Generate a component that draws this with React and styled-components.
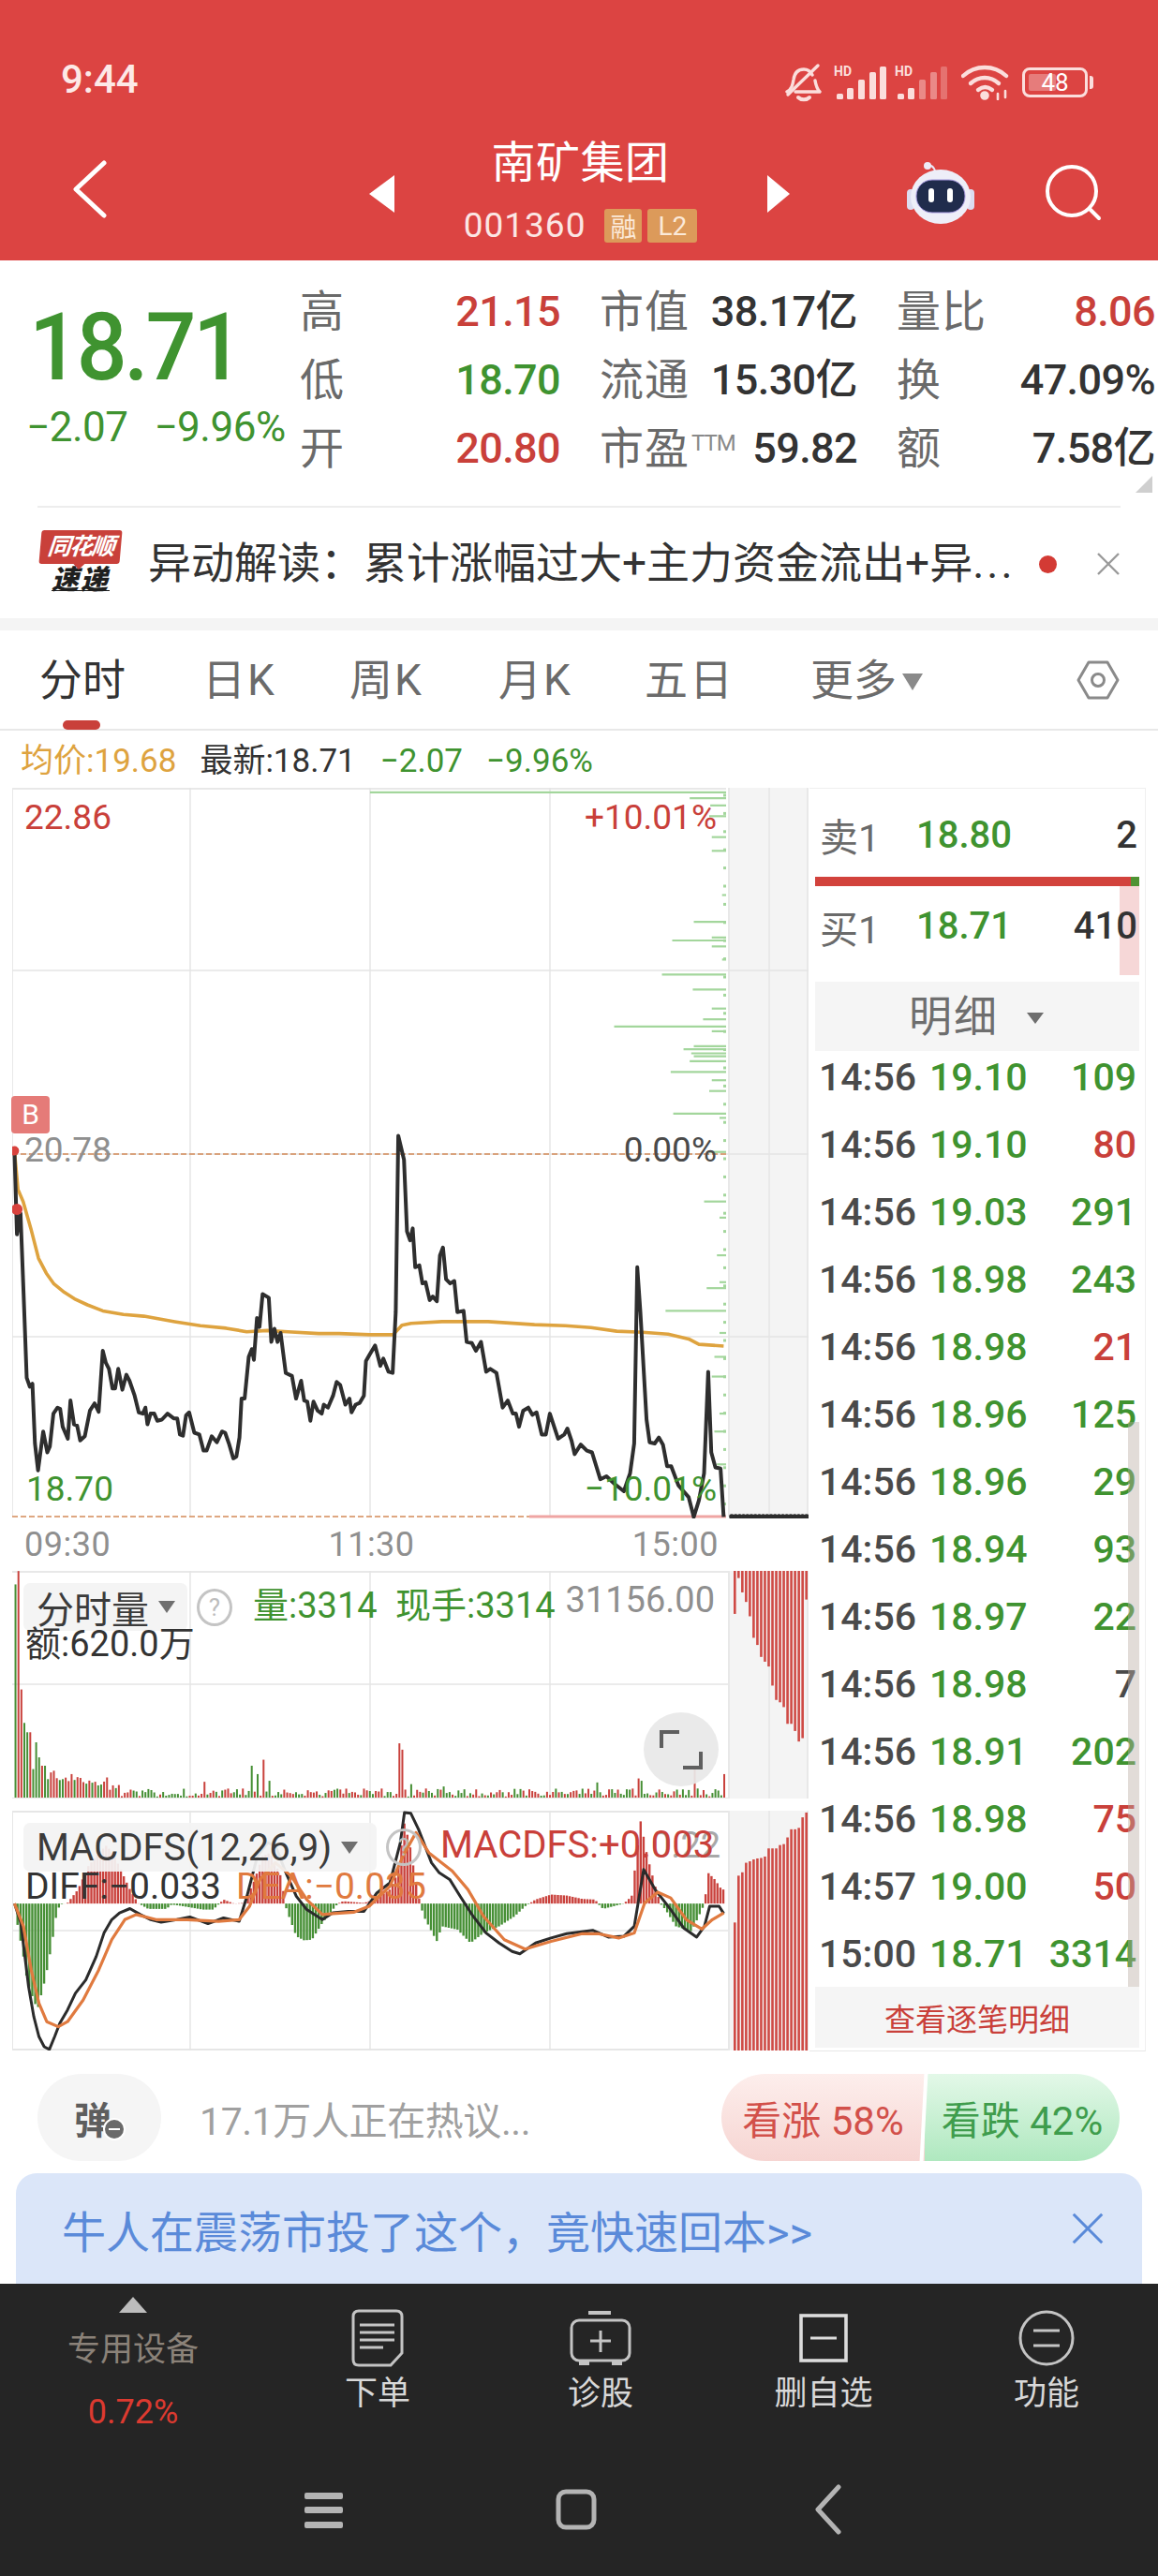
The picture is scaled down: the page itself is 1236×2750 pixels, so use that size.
import React from "react";
import styled, { createGlobalStyle } from "styled-components";

const RED = "#c9403a";
const GREEN = "#3f9330";
const HEAD = "#dc4442";
const FONT = `Roboto, "Noto Sans CJK SC", "Noto Sans", sans-serif`;
const toneColor = { red: RED, green: GREEN, dark: "#333", gray: "#8f8f8f", ink: "#4a4a4a" };

const Global = createGlobalStyle`
  html, body { margin: 0; padding: 0; background: #fff; }
  body { font-family: ${FONT}; }
  * { box-sizing: border-box; }
`;

/* ---------- chart data, in sampling coordinates of each plot ---------- */
const PRICE_LINE = [[28,860],[33,1000],[40,965],[46,1100],[52,1240],[58,1255],[63,1250],[68,1350],[74,1395],[84,1330],[92,1365],[97,1355],[104,1300],[112,1290],[117,1292],[122,1322],[132,1342],[137,1278],[144,1318],[150,1320],[156,1345],[165,1338],[175,1295],[184,1283],[192,1297],[200,1195],[206,1215],[212,1225],[219,1258],[224,1258],[230,1225],[238,1260],[246,1235],[252,1245],[262,1270],[270,1298],[278,1300],[283,1290],[287,1318],[293,1300],[300,1300],[306,1312],[315,1310],[326,1300],[338,1308],[345,1308],[350,1335],[356,1337],[362,1303],[368,1298],[378,1332],[388,1335],[396,1362],[402,1362],[412,1338],[422,1348],[432,1330],[438,1332],[446,1352],[454,1375],[460,1372],[466,1340],[470,1275],[476,1275],[484,1205],[490,1192],[494,1210],[500,1140],[505,1155],[511,1100],[523,1106],[528,1180],[534,1158],[540,1180],[546,1165],[556,1232],[568,1237],[576,1275],[586,1245],[592,1278],[598,1280],[604,1312],[610,1280],[618,1295],[626,1300],[630,1285],[638,1290],[648,1270],[655,1247],[662,1252],[672,1285],[680,1275],[684,1298],[692,1285],[700,1282],[708,1270],[712,1212],[720,1200],[730,1186],[740,1220],[746,1208],[756,1230],[764,1232],[770,1130],[775,835],[786,875],[792,995],[798,1010],[803,990],[808,1055],[816,1052],[822,1082],[828,1080],[836,1110],[842,1104],[850,1112],[856,1035],[862,1022],[868,1075],[876,1082],[884,1078],[890,1130],[902,1128],[908,1180],[918,1182],[926,1195],[936,1180],[946,1230],[954,1225],[966,1232],[978,1290],[988,1278],[998,1300],[1004,1300],[1010,1322],[1018,1295],[1028,1290],[1036,1302],[1044,1298],[1054,1335],[1062,1335],[1070,1300],[1086,1342],[1098,1335],[1104,1325],[1112,1345],[1118,1368],[1130,1352],[1142,1362],[1152,1365],[1168,1410],[1180,1405],[1196,1418],[1214,1430],[1226,1400],[1234,1350],[1240,1055],[1246,1130],[1258,1310],[1264,1348],[1274,1350],[1282,1340],[1290,1352],[1298,1388],[1306,1388],[1320,1420],[1330,1430],[1340,1440],[1350,1473],[1360,1445],[1370,1400],[1378,1230],[1384,1365],[1392,1390],[1402,1392],[1408,1473]];
const AVG_LINE = [[28,860],[35,925],[45,945],[60,990],[75,1040],[90,1065],[105,1083],[125,1097],[145,1108],[170,1118],[200,1128],[240,1134],[280,1137],[340,1146],[390,1153],[440,1157],[480,1163],[520,1161],[560,1163],[620,1166],[660,1166],[720,1168],[765,1168],[782,1152],[800,1149],[860,1146],[950,1146],[1040,1151],[1100,1153],[1150,1156],[1200,1162],[1250,1164],[1300,1167],[1340,1175],[1360,1184],[1408,1187]];
const DEPTH_BARS = [[720,260],[1342,270],[1382,282],[1380,300],[1385,335],[1385,358],[1405,432],[1350,477],[1308,508],[1385,503],[1385,518],[1405,540],[1288,565],[1348,590],[1385,622],[1368,640],[1195,652],[1385,660],[1330,690],[1350,685],[1345,697],[1350,702],[1342,710],[1305,728],[1385,742],[1380,760],[1310,798],[1400,805],[1380,862],[1370,945],[1400,972],[1395,1035],[1375,1090],[1400,1080],[1295,1128],[1400,1165],[1390,1205],[1385,1238],[1400,1300],[1390,1330],[1395,1385]];
const MACD_DIFF = [[28,1042],[40,1100],[55,1290],[65,1380],[75,1440],[85,1470],[95,1478],[105,1440],[115,1400],[130,1360],[145,1310],[165,1270],[185,1200],[200,1130],[215,1090],[230,1070],[250,1057],[270,1075],[290,1090],[310,1098],[340,1090],[365,1082],[400,1102],[430,1085],[460,1095],[475,1020],[495,900],[515,860],[530,870],[550,950],[570,1020],[590,1060],[620,1090],[640,1070],[670,1065],[700,1065],[725,1010],[750,980],[770,860],[778,770],[790,772],[805,820],[830,920],[845,950],[865,970],[885,1020],[910,1080],[935,1130],[960,1160],[985,1185],[1000,1192],[1030,1160],[1060,1145],[1090,1132],[1140,1122],[1170,1142],[1200,1140],[1220,1110],[1238,940],[1260,1000],[1290,1060],[1315,1115],[1340,1142],[1355,1110],[1365,1050],[1383,1050],[1392,1072]];
const MACD_DEA = [[28,1042],[45,1110],[60,1240],[75,1340],[90,1395],[112,1410],[130,1395],[160,1330],[190,1240],[215,1150],[240,1090],[262,1075],[300,1090],[360,1090],[420,1095],[460,1090],[480,1050],[500,970],[530,920],[560,960],[590,1030],[620,1075],[640,1072],[680,1068],[710,1050],[750,990],[775,900],[800,830],[825,890],[870,945],[900,1000],[930,1080],[970,1150],[1010,1178],[1060,1155],[1120,1132],[1150,1132],[1190,1145],[1220,1130],[1240,1040],[1265,1008],[1290,1025],[1320,1090],[1350,1118],[1370,1090],[1392,1070]];
const MACD_HIST = [[28,1042],[33,1100],[45,1200],[52,1270],[60,1310],[72,1360],[85,1280],[92,1230],[100,1160],[108,1080],[115,1045],[130,1040],[150,1000],[170,930],[190,890],[205,868],[220,900],[235,950],[250,1000],[265,1040],[285,1058],[320,1058],[330,1045],[345,1048],[390,1060],[410,1060],[430,1030],[450,1042],[470,1040],[490,970],[505,900],[520,890],[540,960],[549,1042],[551,1060],[570,1140],[585,1152],[600,1150],[620,1100],[640,1060],[650,1042],[660,1035],[700,1040],[720,1030],[750,1000],[765,950],[778,800],[790,880],[800,980],[808,1042],[815,1080],[840,1155],[850,1110],[880,1120],[905,1160],[930,1130],[960,1110],[990,1080],[1010,1050],[1018,1042],[1030,1030],[1060,1015],[1090,1018],[1120,1028],[1145,1030],[1150,1042],[1160,1058],[1180,1050],[1200,1042],[1215,1020],[1232,795],[1245,900],[1262,1000],[1270,1042],[1280,1060],[1300,1110],[1330,1125],[1350,1060],[1355,1042],[1362,950],[1375,970],[1388,1000]];
const VOLUME_PEAKS = { 28: 88, 33: 48, 38: 402, 44: 502, 50: 530, 56: 530, 62: 640, 68: 560, 74: 605, 80: 630, 86: 630, 92: 670, 98: 650, 104: 645, 135: 655, 204: 665, 392: 678, 482: 630, 493: 655, 505: 612, 516: 675, 766: 563, 772: 582, 790: 685, 850: 692, 1148: 680, 1226: 668, 1232: 675, 1335: 630, 1390: 655 };
const SIDE_VOLUME = [595,520,550,570,600,645,660,685,695,705,745,775,780,790,825,825,840,862,855,565];
const SIDE_MACD = [1240,1142,1135,1115,1112,1108,1106,1105,1102,1085,1085,1085,1078,1076,1062,1045,1045,1042,1020,1010];

const rand = (seed) => { const v = Math.sin(seed * 91.37) * 43758.5453; return v - Math.floor(v); };
const lerp = (pts, x) => {
  for (let i = 1; i < pts.length; i++) {
    if (x <= pts[i][0]) {
      const [x0, y0] = pts[i - 1]; const [x1, y1] = pts[i];
      return y0 + ((y1 - y0) * (x - x0)) / (x1 - x0 || 1);
    }
  }
  return pts[pts.length - 1][1];
};
const priceX = (x) => x / 1.823 - 13;
const priceY = (y) => y / 1.568 + 680 - 841;
const lowerX = (x) => x / 1.802 - 13;
const volumeY = (y) => y / 2.8 + 1660 - 1677;
const macdY = (y) => y / 2.8 + 1660 - 1933;
const polyline = (pts, fx, fy) => pts.map(([x, y]) => `${fx(x).toFixed(1)},${fy(y).toFixed(1)}`).join(" ");

const sampleXs = [];
for (let x = 28; x <= 1392; x += 5.68) sampleXs.push(x);

const volumeBars = sampleXs.map((x, i) => {
  const peak = Object.keys(VOLUME_PEAKS).find((k) => Math.abs(+k - x) < 2.9);
  const decay = x < 230 ? 60 * (1 - x / 230) + 14 : 0;
  const top = peak ? VOLUME_PEAKS[peak] : 727 - (decay + 5 + rand(i + 3) * 24);
  return { x: lowerX(x), y: volumeY(top), h: volumeY(727) - volumeY(top), up: rand(i + 11) > 0.48 };
});
const macdBars = sampleXs.map((x) => {
  const tip = lerp(MACD_HIST, x);
  return { x: lowerX(x), tip: macdY(tip), zero: macdY(1042), up: tip < 1042 };
});

/* ---------- page shell ---------- */
const Page = styled.div`
  width: 1236px;
  height: 2750px;
  display: flex;
  flex-direction: column;
  overflow: hidden;
  background: #fff;
  color: #333;
`;

/* ---------- red header ---------- */
const Header = styled.header`
  height: 278px;
  flex: none;
  background: ${HEAD};
  color: #fff;
`;
const StatusRow = styled.div`
  height: 150px;
  padding: 64px 75px 0 65px;
  display: flex;
  justify-content: space-between;
  align-items: flex-start;
`;
const Clock = styled.span`
  font-size: 42px;
  line-height: 42px;
  font-weight: 500;
  color: #fde9e7;
`;
const TitleRow = styled.div`
  height: 128px;
  padding: 0 60px;
  display: grid;
  grid-template-columns: 1fr auto 1fr;
  align-items: center;
`;
const BackSlot = styled.div`
  padding-left: 18px;
  display: flex;
  align-items: center;
  height: 62px;
  margin-top: -24px;
`;
const TitleCluster = styled.div`
  display: flex;
  align-items: center;
  margin-top: -24px;
`;
const TitleStack = styled.div`
  width: 398px;
  display: flex;
  flex-direction: column;
  align-items: center;
  margin-top: 4px;
`;
const Title = styled.div`
  font-size: 47px;
  line-height: 50px;
  letter-spacing: 0.5px;
  color: #fff;
`;
const CodeRow = styled.div`
  margin-top: 24px;
  display: flex;
  align-items: center;
  gap: 6px;
`;
const Code = styled.span`
  font-size: 37px;
  line-height: 36px;
  letter-spacing: 1px;
  margin-right: 14px;
  color: #fbe6e4;
`;
const CodeBadge = styled.span`
  height: 36px;
  padding: 0 ${(p) => p.$pad}px;
  display: inline-flex;
  align-items: center;
  border-radius: 3px;
  background: #dc9a5a;
  color: #fbe9d8;
  font-size: 28px;
`;
const Triangle = styled.span`
  width: 0;
  height: 0;
  border-top: 20px solid transparent;
  border-bottom: 20px solid transparent;
  ${(p) => (p.$dir === "left" ? "border-right: 27px solid #fff;" : "border-left: 24px solid #fff;")}
  margin-top: 10px;
`;
const ActionSlot = styled.div`
  display: flex;
  justify-content: flex-end;
  align-items: center;
  gap: 76px;
  margin-top: -16px;
`;

/* ---------- quote block ---------- */
const Quote = styled.section`
  height: 262px;
  flex: none;
  position: relative;
  display: flex;
  padding-top: 18px;
`;
const PriceBlock = styled.div`
  width: 320px;
  flex: none;
  padding-left: 31px;
`;
const BigPrice = styled.div`
  font-size: 101px;
  line-height: 110px;
  margin-top: 20px;
  font-weight: 500;
  color: ${GREEN};
  letter-spacing: -3.5px;
  transform: scaleX(0.94);
  transform-origin: left center;
`;
const PriceDelta = styled.div`
  margin-top: 5px;
  margin-left: -3px;
  display: flex;
  gap: 28px;
  font-size: 44px;
  line-height: 50px;
  letter-spacing: -0.5px;
  color: ${GREEN};
  white-space: nowrap;
`;
const StatGrid = styled.div`
  display: grid;
  grid-template-columns: 278px 275px 276px;
  column-gap: 42px;
  grid-auto-rows: 73px;
  align-items: center;
  flex: 1;
`;
const Stat = styled.div`
  display: flex;
  justify-content: space-between;
  align-items: center;
  white-space: nowrap;
`;
const StatLabel = styled.span`
  font-size: 47px;
  line-height: 56px;
  color: #6a6a6a;
  letter-spacing: 1px;
`;
const Ttm = styled.sup`
  font-size: 24px;
  line-height: 0;
  color: #8a8a8a;
  vertical-align: 14px;
  letter-spacing: -1px;
  margin-left: 2px;
`;
const StatValue = styled.span`
  font-size: 45px;
  line-height: 56px;
  font-weight: 500;
  letter-spacing: -0.6px;
  color: ${(p) => toneColor[p.$tone]};
`;
const CornerMark = styled.span`
  position: absolute;
  right: 6px;
  top: 230px;
  width: 0;
  height: 0;
  border-left: 18px solid transparent;
  border-bottom: 18px solid #cfcfcf;
`;

/* ---------- news strip ---------- */
const NewsBar = styled.div`
  height: 120px;
  flex: none;
  margin: 0 40px;
  border-top: 2px solid #ededed;
  display: flex;
  align-items: center;
  position: relative;
`;
const LogoMark = styled.div`
  width: 92px;
  flex: none;
  display: flex;
  flex-direction: column;
  align-items: center;
`;
const LogoBubble = styled.div`
  width: 86px;
  height: 36px;
  background: ${RED};
  border-radius: 3px;
  transform: skewX(-5deg);
  color: #fff;
  font-size: 25px;
  line-height: 36px;
  font-weight: 700;
  font-style: italic;
  text-align: center;
  letter-spacing: -1.5px;
  position: relative;
  &::after {
    content: "";
    position: absolute;
    left: 36px;
    bottom: -6px;
    border-left: 7px solid transparent;
    border-right: 7px solid transparent;
    border-top: 7px solid ${RED};
  }
`;
const LogoFoot = styled.div`
  font-size: 29px;
  line-height: 35px;
  font-weight: 900;
  font-style: italic;
  color: #1f1f1f;
  letter-spacing: 2px;
  text-decoration: underline;
  text-decoration-thickness: 1px;
`;
const NewsText = styled.div`
  margin-left: 26px;
  width: 930px;
  font-size: 46px;
  line-height: 56px;
  color: #333;
  white-space: nowrap;
  overflow: hidden;
`;
const Dots = styled.span`
  letter-spacing: 3px;
`;
const NewsDot = styled.span`
  position: absolute;
  left: 1069px;
  top: 51px;
  width: 19px;
  height: 19px;
  border-radius: 50%;
  background: #d33a34;
`;
const NewsClose = styled.span`
  position: absolute;
  right: 0;
  top: 47px;
  width: 26px;
  height: 26px;
  display: block;
`;
const Strip = styled.div`
  height: 13px;
  flex: none;
  background: #f4f4f4;
`;

/* ---------- tabs ---------- */
const Tabs = styled.nav`
  height: 107px;
  flex: none;
  border-bottom: 2px solid #e8e8e8;
  position: relative;
  display: grid;
  grid-template-columns: 42px 174px 157px 159px 156px 177px 1fr;
  align-items: center;
`;
const Tab = styled.span`
  font-size: 46px;
  line-height: 56px;
  color: ${(p) => (p.$active ? "#333" : "#6b6b6b")};
  display: inline-flex;
  align-items: center;
  letter-spacing: ${(p) => (p.$wide ? "0" : "2px")};
  white-space: nowrap;
`;
const TabCaret = styled.i`
  display: inline-block;
  margin-left: 6px;
  margin-top: 4px;
  width: 0;
  height: 0;
  border-left: 11px solid transparent;
  border-right: 11px solid transparent;
  border-top: 18px solid #8a8a8a;
`;
const TabMark = styled.span`
  position: absolute;
  left: 67px;
  bottom: -1px;
  width: 40px;
  height: 10px;
  border-radius: 5px;
  background: ${RED};
`;
const TabGear = styled.span`
  grid-column: 8;
  justify-self: end;
  margin-right: 41px;
  display: flex;
`;

/* ---------- legend ---------- */
const Legend = styled.div`
  height: 61px;
  flex: none;
  padding: 13px 0 0 22px;
  display: flex;
  font-size: 35px;
  line-height: 40px;
  white-space: nowrap;
`;
const LegendItem = styled.span`
  color: ${(p) => p.$color};
  margin-right: ${(p) => p.$gap}px;
`;

/* ---------- chart area ---------- */
const ChartArea = styled.div`
  height: 1349px;
  flex: none;
  padding-left: 13px;
  display: grid;
  grid-template-columns: 850px 359px;
  column-gap: 1px;
`;
const ChartColumn = styled.div`
  display: flex;
  flex-direction: column;
`;
const Plot = styled.div`
  position: relative;
  height: ${(p) => p.$h}px;
  flex: none;
  & > svg { display: block; }
`;
const PlotLabel = styled.span`
  position: absolute;
  font-size: ${(p) => p.$size || 37}px;
  line-height: 44px;
  color: ${(p) => p.$color};
  white-space: nowrap;
`;
const BuyBadge = styled.span`
  position: absolute;
  left: -1px;
  top: 329px;
  width: 41px;
  height: 40px;
  border-radius: 4px;
  background: #e57b78;
  color: #fff;
  font-size: 30px;
  line-height: 40px;
  text-align: center;
`;
const AxisRow = styled.div`
  height: 58px;
  flex: none;
  width: 767px;
  padding: 8px 13px 0 13px;
  display: flex;
  justify-content: space-between;
  color: #8f8f8f;
  font-size: 36px;
  line-height: 44px;
  letter-spacing: 0.5px;
`;
const IndicatorTag = styled.span`
  position: absolute;
  left: 12px;
  top: ${(p) => p.$top}px;
  width: ${(p) => p.$w}px;
  height: ${(p) => p.$h}px;
  padding-left: 14px;
  border-radius: 7px;
  background: rgba(243, 243, 243, 0.93);
  display: flex;
  align-items: center;
  font-size: 40px;
  color: #3b3b3b;
  white-space: nowrap;
  &::after {
    content: "";
    margin-left: 10px;
    border-left: 9px solid transparent;
    border-right: 9px solid transparent;
    border-top: 13px solid #6f6f6f;
  }
`;
const HelpMark = styled.span`
  position: absolute;
  left: ${(p) => p.$x}px;
  top: ${(p) => p.$y}px;
  width: 38px;
  height: 40px;
  border: 3px solid #c4c4c4;
  border-radius: 50%;
  color: #bdbdbd;
  font-size: 26px;
  line-height: 34px;
  text-align: center;
`;
const ExpandButton = styled.span`
  position: absolute;
  left: 674px;
  top: 151px;
  width: 80px;
  height: 79px;
  border-radius: 50%;
  background: rgba(232, 232, 232, 0.92);
  display: flex;
  align-items: center;
  justify-content: center;
`;
const Gap = styled.div`
  height: 13px;
  flex: none;
`;

/* ---------- order book and ticks ---------- */
const SidePanel = styled.aside`
  height: 1349px;
  padding: 0 6px;
  border: 1px solid #efefef;
  border-bottom-color: #e8e8e8;
  border-left: 0;
  display: flex;
  flex-direction: column;
`;
const BookRow = styled.div`
  position: relative;
  height: ${(p) => p.$h}px;
  flex: none;
  padding: ${(p) => p.$pad};
  display: grid;
  grid-template-columns: 103px 1fr auto;
  align-items: center;
  font-size: 40px;
`;
const BookLabel = styled.span`
  color: #6a6a6a;
  font-size: 41px;
`;
const BookPrice = styled.span`
  color: ${GREEN};
  font-weight: 500;
`;
const BookQty = styled.span`
  position: relative;
  color: #333;
  font-weight: 500;
`;
const DepthBar = styled.div`
  height: 10px;
  flex: none;
  background: linear-gradient(90deg, #d2423c 0 97.4%, #4f9333 97.4% 100%);
`;
const BuyShade = styled.span`
  position: absolute;
  right: 0;
  top: 0;
  bottom: 0;
  width: 21px;
  background: #f6d7d7;
`;
const DetailHead = styled.div`
  height: 74px;
  flex: none;
  margin-top: 7px;
  background: #f5f5f5;
  display: flex;
  align-items: center;
  justify-content: center;
  gap: 30px;
  padding-right: 2px;
  font-size: 46px;
  line-height: 50px;
  color: #6e6e6e;
  letter-spacing: 2px;
`;
const DetailCaret = styled.i`
  border-left: 9px solid transparent;
  border-right: 9px solid transparent;
  border-top: 12px solid #6e6e6e;
  margin-top: 4px;
`;
const TickList = styled.div`
  position: relative;
  height: 999px;
  flex: none;
  overflow: hidden;
`;
const TickRow = styled.div`
  height: 56px;
  margin-bottom: 16px;
  padding: 0 3px 0 4px;
  display: grid;
  grid-template-columns: 118px 100px 1fr;
  align-items: center;
  font-size: 41px;
  font-weight: 500;
`;
const TickTime = styled.span`
  color: #4a4a4a;
`;
const TickPrice = styled.span`
  color: ${GREEN};
`;
const TickVolume = styled.span`
  text-align: right;
  color: ${(p) => toneColor[p.$tone]};
`;
const ScrollThumb = styled.span`
  position: absolute;
  right: 0;
  top: 396px;
  bottom: 0;
  width: 12px;
  background: rgba(186, 172, 162, 0.42);
`;
const FullDetail = styled.div`
  height: 65px;
  flex: none;
  background: #f5f5f5;
  display: flex;
  align-items: center;
  justify-content: center;
  font-size: 33px;
  color: ${RED};
`;

/* ---------- comment row ---------- */
const DiscussRow = styled.div`
  height: 130px;
  flex: none;
  padding: 24px 41px 13px 40px;
  display: flex;
  align-items: center;
`;
const DanmakuButton = styled.div`
  position: relative;
  width: 132px;
  height: 93px;
  border-radius: 47px;
  background: #f5f5f5;
  color: #5e5e5e;
  font-size: 40px;
  font-weight: 700;
  display: flex;
  align-items: center;
  justify-content: center;
  padding-right: 14px;
`;
const DanmakuMinus = styled.span`
  position: absolute;
  left: 70px;
  top: 47px;
  width: 24px;
  height: 24px;
  border-radius: 50%;
  background: #6a6a6a;
  border: 2px solid #fff;
  &::after {
    content: "";
    position: absolute;
    left: 4px;
    right: 4px;
    top: 9px;
    height: 2px;
    background: #fff;
  }
`;
const DiscussText = styled.span`
  margin-left: 41px;
  flex: 1;
  font-size: 41px;
  color: #a0a0a0;
  letter-spacing: -0.4px;
  white-space: nowrap;
`;
const VotePill = styled.div`
  width: 425px;
  height: 93px;
  border-radius: 47px;
  overflow: hidden;
  position: relative;
  display: grid;
  grid-template-columns: 217px 208px;
  font-size: 42px;
`;
const VoteSide = styled.span`
  display: flex;
  align-items: center;
  justify-content: center;
  white-space: nowrap;
  color: ${(p) => p.$color};
  background: linear-gradient(180deg, ${(p) => p.$from}, ${(p) => p.$to});
`;
const VoteSlash = styled.span`
  position: absolute;
  left: 214px;
  top: -4px;
  width: 4px;
  height: 101px;
  background: #fff;
  transform: rotate(3deg);
`;

/* ---------- promo banner ---------- */
const Banner = styled.div`
  height: 118px;
  flex: none;
  margin: 0 17px;
  padding: 0 40px 0 49px;
  border-radius: 22px 22px 0 0;
  background: #dbe6f9;
  display: flex;
  align-items: center;
  justify-content: space-between;
  color: #5a8ad9;
  font-size: 47px;
  white-space: nowrap;
`;

/* ---------- dark bottom bar ---------- */
const BottomBar = styled.footer`
  flex: 1;
  background: #252525;
  color: #d6d6d6;
`;
const ToolRow = styled.div`
  height: 200px;
  display: grid;
  grid-template-columns: 284px repeat(4, 238px);
`;
const DeviceCol = styled.div`
  padding-top: 14px;
  display: flex;
  flex-direction: column;
  align-items: center;
`;
const DeviceCaret = styled.i`
  width: 0;
  height: 0;
  border-left: 15px solid transparent;
  border-right: 15px solid transparent;
  border-bottom: 17px solid #bdbdbd;
`;
const DeviceName = styled.span`
  margin-top: 22px;
  font-size: 35px;
  line-height: 36px;
  color: #8b8279;
`;
const DeviceRate = styled.span`
  margin-top: 30px;
  font-size: 36px;
  line-height: 36px;
  color: #dc3a30;
`;
const ToolItem = styled.div`
  padding-top: 27px;
  display: flex;
  flex-direction: column;
  align-items: center;
`;
const ToolIcon = styled.div`
  height: 62px;
  display: flex;
  align-items: center;
  justify-content: center;
`;
const ToolLabel = styled.span`
  margin-top: 10px;
  font-size: 35px;
  line-height: 38px;
  color: #d8d8d8;
`;
const SystemKeys = styled.div`
  height: 82px;
  width: 807px;
  margin-left: 211px;
  display: grid;
  grid-template-columns: repeat(3, 1fr);
  justify-items: center;
  align-items: center;
`;

/* ---------- drawn icons ---------- */
const BellMuted = () => (
  <svg width="40" height="42" viewBox="0 0 40 42" fill="none" stroke="#fbdedc" strokeWidth="3.4" strokeLinecap="round" strokeLinejoin="round">
    <path d="M3 31c5-3 6-7 7-13 1-7 5-11 11-11 4 0 7 2 9 6M33 19c1 6 2 9 5 12H12" />
    <path d="M15 37c3 3 9 3 12 0" strokeWidth="4" />
    <path d="M4 34L36 3" />
  </svg>
);
const SignalIcon = ({ dim }) => (
  <svg width="56" height="38" viewBox="0 0 56 38">
    <text x="0" y="12" fontFamily="Roboto" fontWeight="700" fontSize="14" fill="#fbdedc">HD</text>
    {[[3, 31, 6], [14, 25, 12], [26, 16, 21], [38, 8, 29]].map(([x, y, h], i) => (
      <rect key={i} x={x} y={y} width="7" height={h} rx="1.5" fill="#fbdedc" opacity={dim && i > 1 ? 0.45 : 1} />
    ))}
    <rect x="49" y="2" width="7" height="35" rx="1.5" fill="#fbdedc" opacity={dim ? 0.3 : 1} />
  </svg>
);
const WifiIcon = () => (
  <svg width="52" height="38" viewBox="0 0 52 38" fill="none" stroke="#fbdedc" strokeWidth="4.4" strokeLinecap="round">
    <path d="M2 12c13-12 33-12 46 0" />
    <path d="M10 20c9-8 21-8 30 0" />
    <path d="M18 27c5-4 10-4 15 0" />
    <circle cx="25" cy="33" r="2.6" fill="#fbdedc" />
    <path d="M39 31v6M47 28v7" strokeWidth="2.6" />
  </svg>
);
const BatteryBody = styled.span`
  position: relative;
  width: 70px;
  height: 32px;
  border: 3px solid #fbdedc;
  border-radius: 8px;
  display: block;
  color: #fff;
  font-size: 26px;
  line-height: 26px;
  text-align: center;
  &::before {
    content: "";
    position: absolute;
    left: 4px;
    top: 4px;
    bottom: 4px;
    width: 29px;
    background: rgba(255, 255, 255, 0.3);
    border-radius: 2px;
  }
  &::after {
    content: "";
    position: absolute;
    right: -9px;
    top: 6px;
    width: 4px;
    height: 14px;
    background: #fbdedc;
    border-radius: 0 3px 3px 0;
  }
`;
const StatusIcons = styled.div`
  display: flex;
  align-items: center;
  margin-top: 3px;
`;
const IconGap = styled.span`
  display: inline-flex;
  margin-right: ${(p) => p.$r}px;
`;
const Robot = () => (
  <svg width="72" height="68" viewBox="0 0 72 68">
    <path d="M30 10C28 5 25 4 22 5" fill="none" stroke="#e8e5f5" strokeWidth="2" />
    <circle cx="22" cy="5" r="4" fill="#eeecf8" />
    <rect x="0" y="30" width="8" height="22" rx="4" fill="#dcdcf0" />
    <rect x="64" y="30" width="8" height="22" rx="4" fill="#dcdcf0" />
    <ellipse cx="36" cy="38" rx="32" ry="29" fill="#eeeef8" />
    <rect x="10" y="20" width="52" height="35" rx="17" fill="#202c4c" stroke="#a99be2" strokeWidth="1" />
    <rect x="23" y="29" width="6" height="15" rx="3" fill="#fff" />
    <rect x="43" y="29" width="6" height="15" rx="3" fill="#fff" />
  </svg>
);
const SearchIcon = () => (
  <svg width="60" height="60" viewBox="0 0 60 60" fill="none" stroke="#fff" strokeWidth="4">
    <circle cx="28" cy="28" r="26" />
    <path d="M47 47l10 10" strokeLinecap="round" />
  </svg>
);
const Chevron = ({ w = 36, h = 62, color = "#fff", sw = 5 }) => (
  <svg width={w} height={h} viewBox={`0 0 ${w} ${h}`} fill="none" stroke={color} strokeWidth={sw} strokeLinecap="round" strokeLinejoin="round">
    <path d={`M${w - 3} 3L3 ${h / 2}L${w - 3} ${h - 3}`} />
  </svg>
);
const CloseCross = ({ color = "#9a9a9a", size = 26, sw = 2.4 }) => (
  <svg width={size} height={size} viewBox="0 0 26 26" fill="none" stroke={color} strokeWidth={sw}>
    <path d="M2 2l22 22M24 2L2 24" />
  </svg>
);
const HexGear = () => (
  <svg width="46" height="46" viewBox="0 0 46 46" fill="none" stroke="#8a8a8a" strokeWidth="3">
    <path d="M13 4h20l11 19-11 19H13L2 23z" strokeLinejoin="round" />
    <circle cx="23" cy="23" r="6.5" />
  </svg>
);
const ToolStroke = { fill: "none", stroke: "#c4c4c4", strokeWidth: 3 };
const OrderIcon = () => (
  <svg width="56" height="62" viewBox="0 0 56 62" {...ToolStroke}>
    <path d="M8 2h40q6 0 6 6v39L42 60H8q-6 0-6-6V8q0-6 6-6z" />
    <path d="M9 17h37M9 25h37M9 33h37M9 41h25" />
  </svg>
);
const DiagnoseIcon = () => (
  <svg width="66" height="60" viewBox="0 0 66 60" {...ToolStroke}>
    <path d="M20 3h24" strokeWidth="4" />
    <rect x="2" y="11" width="62" height="43" rx="8" />
    <path d="M33 22v23M22 33h22" />
    <path d="M10 56h11M45 56h11" strokeWidth="6" />
  </svg>
);
const RemoveIcon = () => (
  <svg width="52" height="52" viewBox="0 0 52 52" fill="none" stroke="#dcdcdc" strokeWidth="3.6">
    <rect x="2" y="2" width="48" height="48" />
    <path d="M12 26h28" strokeWidth="3" />
  </svg>
);
const MoreIcon = () => (
  <svg width="60" height="60" viewBox="0 0 60 60" {...ToolStroke}>
    <circle cx="30" cy="30" r="28" />
    <path d="M16 22h28M16 38h28" />
  </svg>
);
const MenuKey = () => (
  <svg width="42" height="42" viewBox="0 0 42 42" fill="#b4b4b4">
    <rect x="0" y="3" width="41" height="7" rx="2" />
    <rect x="0" y="18" width="41" height="7" rx="2" />
    <rect x="0" y="34" width="41" height="7" rx="2" />
  </svg>
);
const HomeKey = () => (
  <svg width="44" height="44" viewBox="0 0 44 44" fill="none" stroke="#b4b4b4" strokeWidth="5">
    <rect x="3" y="3" width="38" height="38" rx="8" />
  </svg>
);
const ExpandCorners = () => (
  <svg width="46" height="44" viewBox="0 0 46 44" fill="none" stroke="#5f5f5f" strokeWidth="4">
    <path d="M2 20V3h19M44 24v17H25" />
  </svg>
);

/* ---------- chart drawings ---------- */
const GRID = "#e4e4e4";
const SIDE_BG = "#f4f4f4";
const SideBackdrop = ({ h }) => (
  <>
    <rect x="764" y="0" width="86" height={h} fill={SIDE_BG} />
    <line x1="808" y1="0" x2="808" y2={h} stroke="#e6e6e6" strokeWidth="1.5" />
    <line x1="765" y1="0" x2="765" y2={h} stroke="#e8e8e8" strokeWidth="2" />
    <line x1="849" y1="0" x2="849" y2={h} stroke="#e8e8e8" strokeWidth="2" />
  </>
);
const verticalGrid = (h) =>
  [190, 382, 574].map((x) => <line key={x} x1={x} y1="0" x2={x} y2={h} stroke={GRID} strokeWidth="1.4" />);
const sideXs = Array.from({ length: 20 }, (_, i) => 770 + i * 4.02);

const PriceChart = () => {
  const dots = [];
  for (let i = 0; i < 20; i++) dots.push(<circle key={i} cx={768 + i * 4.2} cy="778" r="2.8" fill="#2c2c2c" />);
  return (
    <svg width="850" height="780" viewBox="0 0 850 780">
      <SideBackdrop h={778} />
      <path d="M0 1H762M0 1V778" stroke="#e8e8e8" strokeWidth="2" fill="none" />
      {[195, 391, 586].map((y) => <line key={y} x1="0" y1={y} x2="850" y2={y} stroke={GRID} strokeWidth="1.4" />)}
      {verticalGrid(778)}
      {DEPTH_BARS.map(([x, y], i) => (
        <line key={i} x1={priceX(x)} y1={priceY(y)} x2="762" y2={priceY(y)} stroke="#a3d69c" strokeWidth="2.2" />
      ))}
      {Array.from({ length: 40 }, (_, i) => (
        <line key={i} x1="759" y1={8 + i * 19.4} x2="762" y2={8 + i * 19.4} stroke="#a3d69c" strokeWidth="3" />
      ))}
      <line x1="0" y1="391" x2="762" y2="391" stroke="#d38a58" strokeWidth="1.6" strokeDasharray="6 3" />
      <line x1="0" y1="778" x2="762" y2="778" stroke="#d38a58" strokeWidth="1.4" strokeDasharray="6 3" />
      <line x1="552" y1="778" x2="762" y2="778" stroke="#efa5a3" strokeWidth="3" />
      <polyline points={polyline(AVG_LINE, priceX, priceY)} fill="none" stroke="#dea33f" strokeWidth="3.6" strokeLinejoin="round" />
      <polyline points={polyline(PRICE_LINE, priceX, priceY)} fill="none" stroke="#2e2e2e" strokeWidth="4" strokeLinejoin="round" />
      <circle cx={priceX(28)} cy={priceY(860)} r="5" fill="#d8423d" />
      <circle cx={priceX(33)} cy={priceY(958)} r="6" fill="#d8423d" />
      {dots}
    </svg>
  );
};
const VolumeChart = () => (
  <svg width="850" height="243" viewBox="0 0 850 243">
    <SideBackdrop h={243} />
    <path d="M0 1H764" stroke="#e8e8e8" strokeWidth="2" />
    <line x1="0" y1="121" x2="764" y2="121" stroke={GRID} strokeWidth="1.4" />
    {verticalGrid(243)}
    {volumeBars.map((b, i) => (
      <rect key={i} x={b.x} y={b.y} width="2" height={b.h} fill={b.up ? "#c9413c" : "#468f35"} />
    ))}
    <rect x="0" y="242" width="764" height="1.5" fill="#e8e8e8" />
    {SIDE_VOLUME.map((y, i) => (
      <rect key={i} x={sideXs[i]} y="0" width="2.6" height={(y - 505) / 1.96} fill="#cf4a45" />
    ))}
  </svg>
);
const MacdChart = () => (
  <svg width="850" height="256" viewBox="0 0 850 256">
    <SideBackdrop h={256} />
    <path d="M0 1H764M0 1V255M0 255H764" stroke="#e6e6e6" strokeWidth="2" fill="none" />
    <line x1="0" y1="128" x2="764" y2="128" stroke={GRID} strokeWidth="1.4" />
    {verticalGrid(256)}
    {macdBars.map((b, i) => (
      <line key={i} x1={b.x} y1={b.zero} x2={b.x} y2={b.tip} stroke={b.up ? "#c9413c" : "#468f35"} strokeWidth="2.4" />
    ))}
    <polyline points={polyline(MACD_DIFF, lowerX, macdY)} fill="none" stroke="#2b2b2b" strokeWidth="3" strokeLinejoin="round" />
    <polyline points={polyline(MACD_DEA, lowerX, macdY)} fill="none" stroke="#e07a3f" strokeWidth="3.2" strokeLinejoin="round" />
    {SIDE_MACD.map((y, i) => (
      <rect key={i} x={sideXs[i]} y={(y - 1010) / 1.96 + 2} width="2.6" height={256} fill="#cf4a45" />
    ))}
  </svg>
);

/* ---------- content ---------- */
const STATS = [
  ["高", "21.15", "red", "市值", "38.17亿", "dark", "量比", "8.06", "red"],
  ["低", "18.70", "green", "流通", "15.30亿", "dark", "换", "47.09%", "dark"],
  ["开", "20.80", "red", "市盈", "59.82", "dark", "额", "7.58亿", "dark"],
];
const TICKS = [
  ["14:56", "19.10", "109", "green"], ["14:56", "19.10", "80", "red"], ["14:56", "19.03", "291", "green"],
  ["14:56", "18.98", "243", "green"], ["14:56", "18.98", "21", "red"], ["14:56", "18.96", "125", "green"],
  ["14:56", "18.96", "29", "green"], ["14:56", "18.94", "93", "green"], ["14:56", "18.97", "22", "green"],
  ["14:56", "18.98", "7", "ink"], ["14:56", "18.91", "202", "green"], ["14:56", "18.98", "75", "red"],
  ["14:57", "19.00", "50", "red"], ["15:00", "18.71", "3314", "green"],
];
const TOOLS = [
  ["下单", <OrderIcon key="o" />], ["诊股", <DiagnoseIcon key="d" />],
  ["删自选", <RemoveIcon key="r" />], ["功能", <MoreIcon key="m" />],
];

export default function App() {
  return (
    <Page>
      <Global />
      <Header>
        <StatusRow>
          <Clock>9:44</Clock>
          <StatusIcons>
            <IconGap $r={13}><BellMuted /></IconGap>
            <IconGap $r={9}><SignalIcon /></IconGap>
            <IconGap $r={15}><SignalIcon dim /></IconGap>
            <IconGap $r={13}><WifiIcon /></IconGap>
            <BatteryBody>48</BatteryBody>
          </StatusIcons>
        </StatusRow>
        <TitleRow>
          <BackSlot><Chevron /></BackSlot>
          <TitleCluster>
            <Triangle $dir="left" />
            <TitleStack>
              <Title>南矿集团</Title>
              <CodeRow>
                <Code>001360</Code>
                <CodeBadge $pad={6}>融</CodeBadge>
                <CodeBadge $pad={11}>L2</CodeBadge>
              </CodeRow>
            </TitleStack>
            <Triangle $dir="right" />
          </TitleCluster>
          <ActionSlot><Robot /><SearchIcon /></ActionSlot>
        </TitleRow>
      </Header>

      <Quote>
        <PriceBlock>
          <BigPrice>18.71</BigPrice>
          <PriceDelta><span>−2.07</span><span>−9.96%</span></PriceDelta>
        </PriceBlock>
        <StatGrid>
          {STATS.map((r) => (
            <React.Fragment key={r[0]}>
              <Stat><StatLabel>{r[0]}</StatLabel><StatValue $tone={r[2]}>{r[1]}</StatValue></Stat>
              <Stat>
                <StatLabel>{r[3]}{r[3] === "市盈" && <Ttm>TTM</Ttm>}</StatLabel>
                <StatValue $tone={r[5]}>{r[4]}</StatValue>
              </Stat>
              <Stat><StatLabel>{r[6]}</StatLabel><StatValue $tone={r[8]}>{r[7]}</StatValue></Stat>
            </React.Fragment>
          ))}
        </StatGrid>
        <CornerMark />
      </Quote>

      <NewsBar>
        <LogoMark>
          <LogoBubble>同花顺</LogoBubble>
          <LogoFoot>速递</LogoFoot>
        </LogoMark>
        <NewsText>异动解读：累计涨幅过大+主力资金流出+异<Dots>...</Dots></NewsText>
        <NewsDot />
        <NewsClose><CloseCross /></NewsClose>
      </NewsBar>
      <Strip />

      <Tabs>
        <span />
        <Tab $active $wide>分时</Tab>
        <Tab>日K</Tab>
        <Tab>周K</Tab>
        <Tab>月K</Tab>
        <Tab>五日</Tab>
        <Tab $wide>更多<TabCaret /></Tab>
        <TabMark />
        <TabGear><HexGear /></TabGear>
      </Tabs>

      <Legend>
        <LegendItem $color="#dea33f" $gap={25}>均价:19.68</LegendItem>
        <LegendItem $color="#333" $gap={26}>最新:18.71</LegendItem>
        <LegendItem $color={GREEN} $gap={25}>−2.07</LegendItem>
        <LegendItem $color={GREEN} $gap={0}>−9.96%</LegendItem>
      </Legend>

      <ChartArea>
        <ChartColumn>
          <Plot $h={778}>
            <PriceChart />
            <PlotLabel $color={RED} style={{ left: 13, top: 10 }}>22.86</PlotLabel>
            <PlotLabel $color={RED} style={{ right: 98, top: 10 }}>+10.01%</PlotLabel>
            <PlotLabel $color="#8f8f8f" style={{ left: 13, top: 365 }}>20.78</PlotLabel>
            <PlotLabel $color="#4a4a4a" style={{ right: 98, top: 365 }}>0.00%</PlotLabel>
            <PlotLabel $color={GREEN} style={{ left: 15, top: 727 }}>18.70</PlotLabel>
            <PlotLabel $color={GREEN} style={{ right: 98, top: 727 }}>−10.01%</PlotLabel>
            <BuyBadge>B</BuyBadge>
          </Plot>
          <AxisRow><span>09:30</span><span>11:30</span><span>15:00</span></AxisRow>
          <Plot $h={243}>
            <VolumeChart />
            <IndicatorTag $top={13} $w={175} $h={51}>分时量</IndicatorTag>
            <HelpMark $x={197} $y={19}>?</HelpMark>
            <PlotLabel $color={GREEN} $size={38} style={{ left: 257, top: 15 }}>量:3314</PlotLabel>
            <PlotLabel $color={GREEN} $size={38} style={{ left: 409, top: 15 }}>现手:3314</PlotLabel>
            <PlotLabel $color="#8f8f8f" $size={38} style={{ right: 100, top: 9 }}>31156.00</PlotLabel>
            <PlotLabel $color="#333" $size={38} style={{ left: 14, top: 56 }}>额:620.0万</PlotLabel>
            <ExpandButton><ExpandCorners /></ExpandButton>
          </Plot>
          <Gap />
          <Plot $h={256}>
            <MacdChart />
            <IndicatorTag $top={13} $w={377} $h={52}>MACDFS(12,26,9)</IndicatorTag>
            <HelpMark $x={399} $y={19}>?</HelpMark>
            <PlotLabel $color="#a8a8a8" $size={38} style={{ left: 682, top: 15 }}>0.22</PlotLabel>
            <PlotLabel $color={RED} $size={40} style={{ left: 457, top: 15 }}>MACDFS:+0.003</PlotLabel>
            <PlotLabel $color="#333" $size={39} style={{ left: 14, top: 59 }}>DIFF:−0.033</PlotLabel>
            <PlotLabel $color="#e07a3f" $size={39} style={{ left: 239, top: 59 }}>DEA:−0.035</PlotLabel>
          </Plot>
        </ChartColumn>

        <SidePanel>
          <BookRow $h={94} $pad="4px 2px 0 5px">
            <BookLabel>卖1</BookLabel><BookPrice>18.80</BookPrice><BookQty>2</BookQty>
          </BookRow>
          <DepthBar />
          <BookRow $h={95} $pad="0 2px 10px 5px">
            <BuyShade />
            <BookLabel>买1</BookLabel><BookPrice>18.71</BookPrice><BookQty>410</BookQty>
          </BookRow>
          <DetailHead>明细<DetailCaret /></DetailHead>
          <TickList>
            {TICKS.map((t, i) => (
              <TickRow key={i}>
                <TickTime>{t[0]}</TickTime>
                <TickPrice>{t[1]}</TickPrice>
                <TickVolume $tone={t[3]}>{t[2]}</TickVolume>
              </TickRow>
            ))}
            <ScrollThumb />
          </TickList>
          <FullDetail>查看逐笔明细</FullDetail>
        </SidePanel>
      </ChartArea>

      <DiscussRow>
        <DanmakuButton>弹<DanmakuMinus /></DanmakuButton>
        <DiscussText>17.1万人正在热议...</DiscussText>
        <VotePill>
          <VoteSide $color="#d2504a" $from="#fdeeec" $to="#f6d5d2">看涨 58%</VoteSide>
          <VoteSide $color="#3f9d4d" $from="#e3f8e8" $to="#afe8bf">看跌 42%</VoteSide>
          <VoteSlash />
        </VotePill>
      </DiscussRow>

      <Banner>
        <span>牛人在震荡市投了这个，竟快速回本&gt;&gt;</span>
        <CloseCross color="#5a8ad9" size={36} sw={2.2} />
      </Banner>

      <BottomBar>
        <ToolRow>
          <DeviceCol>
            <DeviceCaret />
            <DeviceName>专用设备</DeviceName>
            <DeviceRate>0.72%</DeviceRate>
          </DeviceCol>
          {TOOLS.map(([label, icon]) => (
            <ToolItem key={label}>
              <ToolIcon>{icon}</ToolIcon>
              <ToolLabel>{label}</ToolLabel>
            </ToolItem>
          ))}
        </ToolRow>
        <SystemKeys>
          <MenuKey />
          <HomeKey />
          <Chevron w={28} h={54} color="#b4b4b4" sw={5} />
        </SystemKeys>
      </BottomBar>
    </Page>
  );
}
